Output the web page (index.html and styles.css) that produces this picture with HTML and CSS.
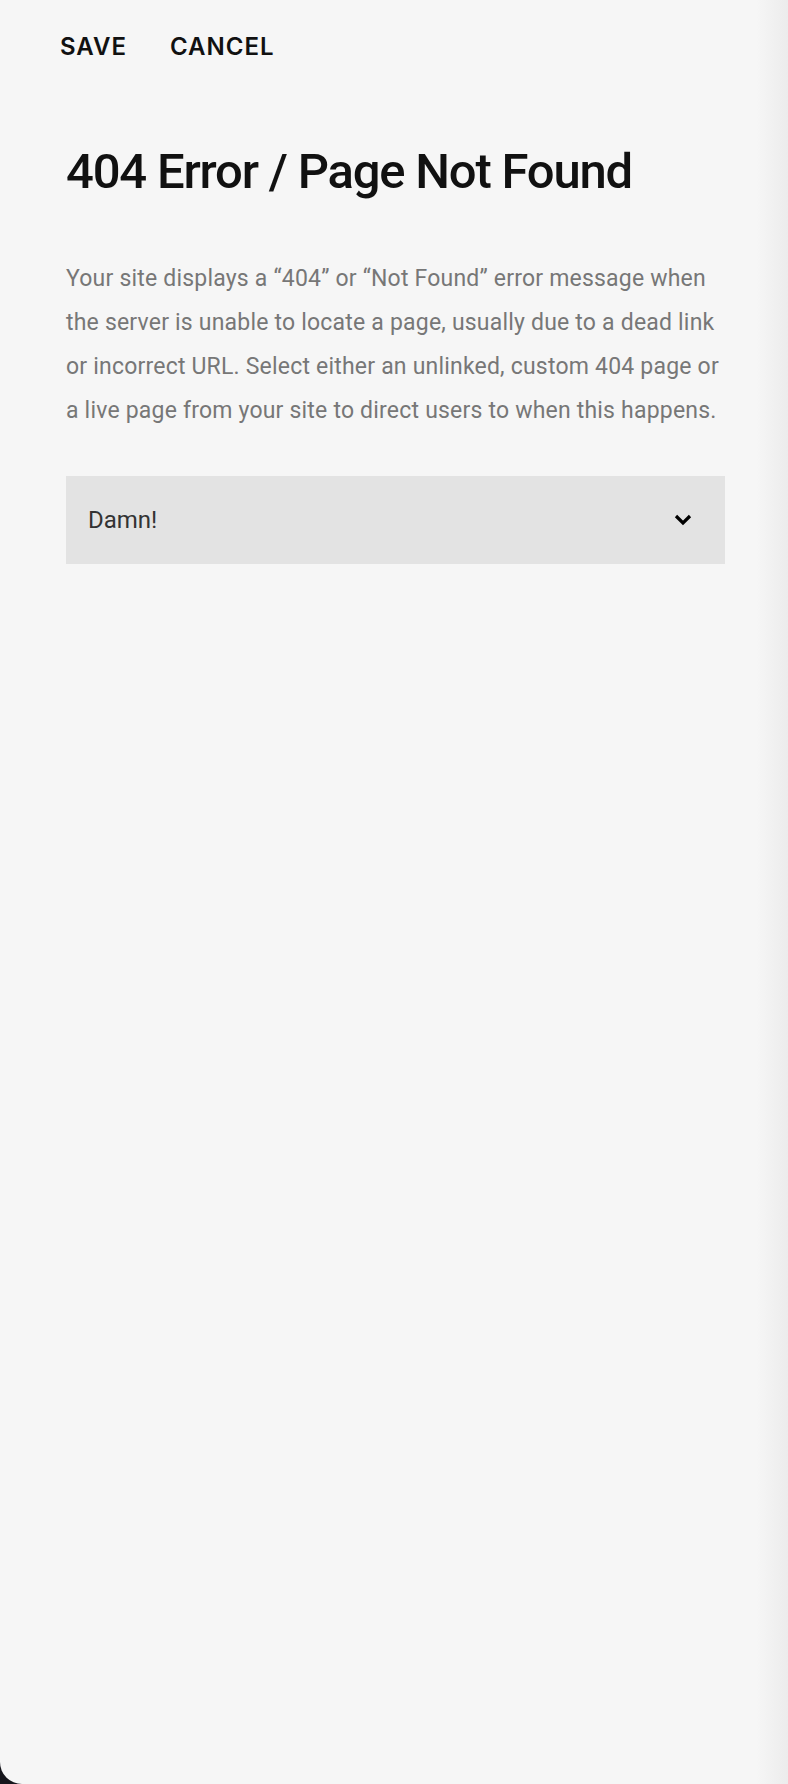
FILE: index.html
```html
<!DOCTYPE html>
<html lang="en">
<head>
    <meta charset="UTF-8">
    <meta name="viewport" content="width=device-width, initial-scale=1.0">
    <title>404 Error / Page Not Found</title>
    <link rel="stylesheet" href="styles.css">
</head>
<body>
    <div class="panel">
        <div class="toolbar">
            <button class="action">SAVE</button>
            <button class="action">CANCEL</button>
        </div>

        <div class="content">
            <h1>404 Error / Page Not Found</h1>
            <p class="description">Your site displays a “404” or “Not Found” error message when the server is unable to locate a page, usually due to a dead link or incorrect URL. Select either an unlinked, custom 404 page or a live page from your site to direct users to when this happens.</p>

            <div class="select">
                <span class="select-value">Damn!</span>
                <svg class="chevron" width="18" height="12" viewBox="0 0 18 12">
                    <path d="M2 2 L9 9 L16 2" fill="none" stroke="#000" stroke-width="3.2"/>
                </svg>
            </div>
        </div>
    </div>
</body>
</html>
```

FILE: styles.css
```css
html, body {
    margin: 0;
    padding: 0;
    height: 100%;
}

body {
    background-color: #16161c;
    font-family: Roboto, "Noto Sans", sans-serif;
}

.panel {
    background: linear-gradient(to right, #f6f6f6 0%, #f6f6f6 96%, #ececec 100%);
    height: 100%;
    border-bottom-left-radius: 22px;
    box-sizing: border-box;
}

.toolbar {
    display: flex;
    gap: 43px;
    padding: 32px 0 0 60px;
}

.action {
    background: none;
    border: none;
    padding: 0;
    font-family: Inter, sans-serif;
    font-size: 24px;
    font-weight: 600;
    letter-spacing: 1px;
    color: #111;
    cursor: pointer;
}

.content {
    padding: 0 63px 0 66px;
}

h1 {
    margin: 80px 0 0;
    font-size: 49px;
    font-weight: 500;
    letter-spacing: -1.2px;
    color: #111;
    line-height: 62px;
}

.description {
    margin: 54px 0 0;
    font-size: 23px;
    letter-spacing: 0.2px;
    line-height: 44px;
    color: #777;
}

.select {
    display: flex;
    align-items: center;
    justify-content: space-between;
    margin-top: 43px;
    height: 88px;
    padding: 0 33px 0 22px;
    background: #e3e3e3;
}

.select-value {
    font-size: 24px;
    color: #333;
}
```
